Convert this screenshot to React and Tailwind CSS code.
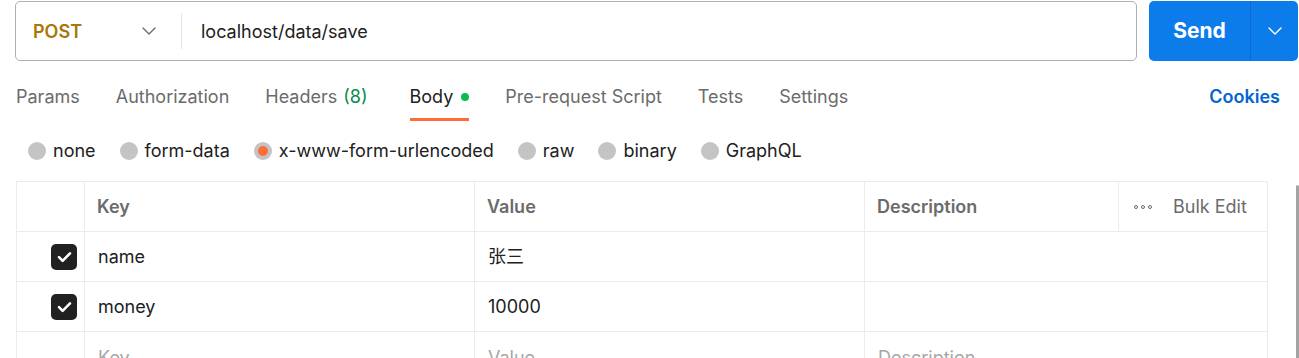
import React from 'react';

const tabs = [
  { label: 'Params' },
  { label: 'Authorization' },
  { label: 'Headers', count: '(8)' },
  { label: 'Body', active: true, dot: true },
  { label: 'Pre-request Script' },
  { label: 'Tests' },
  { label: 'Settings' },
];

const bodyTypes = ['none', 'form-data', 'x-www-form-urlencoded', 'raw', 'binary', 'GraphQL'];

const rows = [
  { key: 'name', value: '张三' },
  { key: 'money', value: '10000' },
];

const Chevron = ({ className, stroke = 'currentColor' }) => (
  <svg className={className} width="14" height="8" viewBox="0 0 14 8" fill="none">
    <path d="M1 1l6 6 6-6" stroke={stroke} strokeWidth="1.4" strokeLinecap="round" strokeLinejoin="round" />
  </svg>
);

const Check = () => (
  <div className="w-[26px] h-[26px] rounded-[5px] bg-[#212121] flex items-center justify-center">
    <svg width="15" height="12" viewBox="0 0 15 12" fill="none">
      <path d="M2 6.2l3.6 3.6L13 2.4" stroke="white" strokeWidth="2.6" strokeLinecap="round" strokeLinejoin="round" />
    </svg>
  </div>
);

export default function App() {
  return (
    <div className="w-[1299px] h-[358px] overflow-hidden bg-white text-[#212121] text-[18px] font-['Inter','Liberation_Sans','Noto_Sans_CJK_SC',sans-serif]">
      {/* request bar */}
      <div className="flex pt-[1px] pl-[15px]">
        <div className="w-[1122px] h-[60px] border border-[#b0b0b0] rounded-[5px] flex items-center">
          <div className="w-[165px] flex items-center pl-[17px]">
            <span className="font-semibold text-[#a77708]">POST</span>
            <Chevron className="ml-auto mr-[25px] text-[#6b6b6b]" />
          </div>
          <div className="w-px h-[36px] bg-[#e4e4e4]" />
          <span className="ml-[19px]">localhost/data/save</span>
        </div>
        <div className="ml-[12px] w-[149px] h-[60px] rounded-[5px] bg-[#0c7ceb] flex text-white">
          <div className="w-[101px] flex items-center justify-center text-[21px] font-bold">Send</div>
          <div className="w-px bg-[#0a6bcc]" />
          <div className="flex-1 flex items-center justify-center">
            <Chevron stroke="white" />
          </div>
        </div>
      </div>

      {/* tabs */}
      <div className="h-[60px] flex items-end pl-[16px] pr-[19px]">
        <div className="flex gap-[36px]">
          {tabs.map((t) => (
            <div key={t.label} className={`flex flex-col ${t.count ? 'mr-[6px]' : ''}`}>
              <div className={`flex items-center leading-[24px] ${t.active ? 'text-[#212121]' : 'text-[#6b6b6b]'}`}>
                <span>{t.label}</span>
                {t.count && <span className="ml-[6px] text-[#0a8a4a]">{t.count}</span>}
                {t.dot && <span className="ml-[8px] w-[8px] h-[8px] rounded-full bg-[#0cbb52]" />}
              </div>
              <div className={`mt-[9px] h-[3px] ${t.active ? 'bg-[#ff6c37]' : 'bg-transparent'}`} />
            </div>
          ))}
        </div>
        <div className="ml-auto mb-[12px] leading-[24px] font-semibold text-[#0265d2]">Cookies</div>
      </div>

      {/* body type radios */}
      <div className="h-[60px] flex items-center pl-[28px] gap-[24px]">
        {bodyTypes.map((b, i) => (
          <div key={b} className="flex items-center gap-[7px]">
            <div className="w-[18px] h-[18px] rounded-full bg-[#c4c4c4] flex items-center justify-center">
              {i === 2 && <div className="w-[10px] h-[10px] rounded-full bg-[#ff6c37]" />}
            </div>
            <span className="leading-[24px]">{b}</span>
          </div>
        ))}
      </div>

      {/* table */}
      <div className="flex">
        <div className="ml-[16px] w-[1252px] border-l border-t border-r border-[#ebebeb]">
          <div className="flex h-[50px] border-b border-[#ebebeb] text-[#6b6b6b] font-semibold">
            <div className="w-[68px] border-r border-[#ebebeb]" />
            <div className="w-[390px] border-r border-[#ebebeb] flex items-center pl-[12px]">Key</div>
            <div className="w-[390px] border-r border-[#ebebeb] flex items-center pl-[12px]">Value</div>
            <div className="w-[254px] border-r border-[#ebebeb] flex items-center pl-[12px]">Description</div>
            <div className="flex-1 flex items-center pl-[15px] font-normal">
              <div className="flex gap-[3px]">
                <span className="w-[4px] h-[4px] rounded-full border border-[#6b6b6b]" />
                <span className="w-[4px] h-[4px] rounded-full border border-[#6b6b6b]" />
                <span className="w-[4px] h-[4px] rounded-full border border-[#6b6b6b]" />
              </div>
              <span className="ml-[21px]">Bulk Edit</span>
            </div>
          </div>
          {rows.map((r) => (
            <div key={r.key} className="flex h-[50px] border-b border-[#ebebeb]">
              <div className="w-[68px] border-r border-[#ebebeb] flex items-center pl-[34px]">
                <Check />
              </div>
              <div className="w-[390px] border-r border-[#ebebeb] flex items-center pl-[13px]">{r.key}</div>
              <div className="w-[390px] border-r border-[#ebebeb] flex items-center pl-[13px]">{r.value}</div>
              <div className="flex-1" />
            </div>
          ))}
          <div className="flex h-[50px] text-[#a6a6a6]">
            <div className="w-[68px] border-r border-[#ebebeb]" />
            <div className="w-[390px] border-r border-[#ebebeb] flex items-center pl-[13px]">Key</div>
            <div className="w-[390px] border-r border-[#ebebeb] flex items-center pl-[13px]">Value</div>
            <div className="flex-1 flex items-center pl-[13px]">Description</div>
          </div>
        </div>
        <div className="ml-auto mt-[4px] w-[3px] h-[200px] rounded-t-[2px] bg-[#a3a3a3]" />
      </div>
    </div>
  );
}
